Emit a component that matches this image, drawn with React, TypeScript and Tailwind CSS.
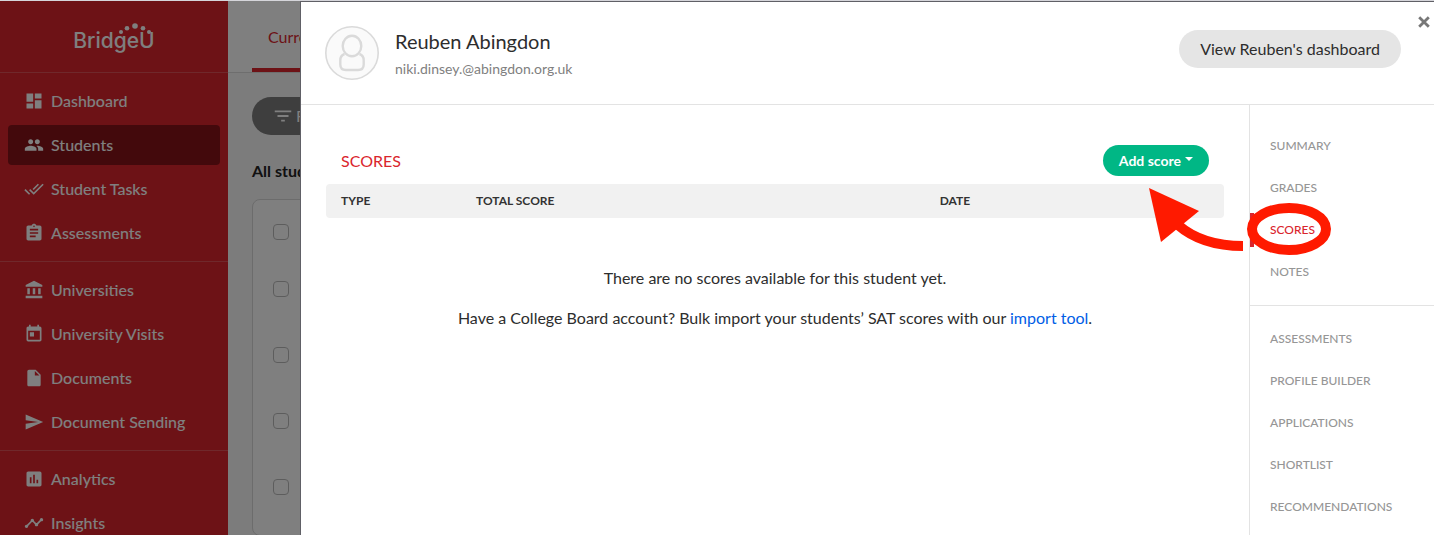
import { useState } from "react";
import type { IconType } from "react-icons";
import {
  MdAccountBalance,
  MdAssessment,
  MdAssignment,
  MdDashboard,
  MdDoneAll,
  MdFilterList,
  MdInsertDriveFile,
  MdPeople,
  MdSend,
  MdTimeline,
  MdToday,
} from "react-icons/md";

interface NavItem {
  label: string;
  icon: IconType;
}

const SIDEBAR: NavItem[][] = [
  [
    { label: "Dashboard", icon: MdDashboard },
    { label: "Students", icon: MdPeople },
    { label: "Student Tasks", icon: MdDoneAll },
    { label: "Assessments", icon: MdAssignment },
  ],
  [
    { label: "Universities", icon: MdAccountBalance },
    { label: "University Visits", icon: MdToday },
    { label: "Documents", icon: MdInsertDriveFile },
    { label: "Document Sending", icon: MdSend },
  ],
  [
    { label: "Analytics", icon: MdAssessment },
    { label: "Insights", icon: MdTimeline },
  ],
];

const PROFILE_TABS = [
  ["Summary", "Grades", "Scores", "Notes"],
  ["Assessments", "Profile Builder", "Applications", "Shortlist", "Recommendations"],
];

const Logo = () => (
  <a href="#" className="relative font-[Inter,sans-serif] text-[21px] leading-7 font-medium text-white">
    BridgeU
    <svg className="absolute -top-1 right-1 h-3 w-8" viewBox="0 0 32 12" fill="currentColor" aria-hidden="true">
      <circle cx="2" cy="9" r="2" />
      <circle cx="8" cy="5.3" r="2.3" />
      <circle cx="16" cy="3" r="2.800" />
      <circle cx="24" cy="5.3" r="2.3" />
      <circle cx="30" cy="9" r="2" />
    </svg>
  </a>
);

const Sidebar = () => (
  <aside className="w-[228px] shrink-0 bg-[#da252d] text-white">
    <div className="flex h-[72px] items-center justify-center border-b border-white/20 pt-2">
      <Logo />
    </div>
    <nav>
      {SIDEBAR.map((group, i) => (
        <ul key={i} className="space-y-1 border-b border-white/20 p-2">
          {group.map(({ label, icon: Icon }) => (
            <li key={label}>
              <a
                href="#"
                className={`flex h-10 items-center gap-[7px] rounded px-4 font-medium ${
                  label === "Students" ? "bg-[#861319]" : ""
                }`}
              >
                <Icon size={20} />
                {label}
              </a>
            </li>
          ))}
        </ul>
      ))}
    </nav>
  </aside>
);

const StudentList = () => (
  <main className="flex-1 bg-[#f8f8f8]">
    <div className="flex h-[72px] border-b border-[#dcdcdc] bg-white px-6">
      <a href="#" className="border-b-4 border-[#da252d] px-4 pt-6 text-[#da252d]">
        Current students
      </a>
    </div>
    <div className="p-6">
      <button type="button" className="flex h-[38px] items-center gap-0.5 rounded-full bg-[#7c7c7c] px-5 text-white">
        <MdFilterList size={22} />
        Filters
      </button>
      <h2 className="mt-6 font-bold text-[#222]">All students</h2>
      <div className="mt-4 space-y-[50px] rounded-lg border border-[#d8d8d8] bg-white px-5 pt-6 pb-10">
        {[1, 2, 3, 4, 5].map((n) => (
          <input
            key={n}
            type="checkbox"
            aria-label={`Select student ${n}`}
            className="block size-4 appearance-none rounded border border-[#bbb] first:mb-[41px]"
          />
        ))}
      </div>
    </div>
  </main>
);

const Avatar = () => (
  <svg className="size-[54px]" viewBox="0 0 54 54" fill="none" stroke="#dadada" aria-hidden="true">
    <circle cx="27" cy="27" r="26.2" fill="#fafafa" strokeWidth="1.6" />
    <path
      d="M19.500 28c-2.800 1-4.200 3.300-4.200 6.300v4.200c0 3.400 2.200 5.500 5.600 5.500h12.200c3.400 0 5.600-2.100 5.600-5.500v-4.200c0-3-1.400-5.300-4.200-6.300"
      strokeWidth="2.4"
    />
    <ellipse cx="27" cy="20" rx="9.300" ry="10.300" strokeWidth="2.4" />
  </svg>
);

const ScoresHint = () => (
  <svg
    className="pointer-events-none absolute -top-7 -left-[101px] z-10 h-[72px] w-[184px]"
    viewBox="0 0 184 72"
    fill="none"
    stroke="#ff1a00"
    strokeWidth="10"
    aria-hidden="true"
  >
    <ellipse cx="140" cy="44" rx="37" ry="21" />
    <path d="M29 40Q53 61 94 61" />
    <path d="M0 3L50 26L12 57Z" fill="#ff1a00" stroke="none" />
  </svg>
);

const ProfileNav = ({ active, onSelect }: { active: string; onSelect: (tab: string) => void }) => (
  <nav className="w-[185px] shrink-0 border-l border-[#e3e3e3]">
    {PROFILE_TABS.map((group, i) => (
      <ul key={i} className={`space-y-2 pb-4 ${i === 0 ? "border-b border-[#e3e3e3] pt-6" : "pt-4"}`}>
        {group.map((tab) => (
          <li key={tab} className="relative">
            <button
              type="button"
              onClick={() => onSelect(tab)}
              className={`flex h-[34px] w-full items-center border-l-4 pl-4 text-xs font-medium uppercase ${
                active === tab ? "border-[#da252d] text-[#da252d]" : "border-transparent text-[#969696]"
              }`}
            >
              {tab}
            </button>
            {tab === "Scores" && <ScoresHint />}
          </li>
        ))}
      </ul>
    ))}
  </nav>
);

const ScoresPanel = () => (
  <section className="min-w-0 flex-1 px-[25px] pt-10">
    <div className="flex items-center justify-between px-[15px]">
      <h2 className="text-[#da252d]">SCORES</h2>
      <button
        type="button"
        className="flex h-[31px] items-center gap-1 rounded-full bg-[#00b785] px-4 text-sm font-bold text-white"
      >
        Add score
        <span className="mb-1 border-x-4 border-t-4 border-x-transparent border-t-white" />
      </button>
    </div>
    <table className="mt-2 w-full table-fixed text-left text-xs text-[#333]">
      <thead>
        <tr className="h-[34px] bg-[#f1f1f1]">
          <th className="w-[135px] rounded-l pl-[15px]">TYPE</th>
          <th className="pl-[15px]">TOTAL SCORE</th>
          <th className="w-1/3 rounded-r pl-[15px]">DATE</th>
        </tr>
      </thead>
    </table>
    <div className="mt-12 space-y-4 text-center text-[#2d2d2d]">
      <p>There are no scores available for this student yet.</p>
      <p>
        Have a College Board account? Bulk import your students’ SAT scores with our{" "}
        <a href="#" className="text-[#005ee6]">
          import tool
        </a>
        .
      </p>
    </div>
  </section>
);

const StudentProfile = () => {
  const [tab, setTab] = useState("Scores");

  return (
    <div
      role="dialog"
      aria-label="Reuben Abingdon"
      className="fixed top-px right-0 bottom-0 left-[300px] flex flex-col overflow-hidden border-t border-l border-[#606066] bg-white"
    >
      <header className="flex h-[103px] shrink-0 items-center border-b border-[#e3e3e3] pr-[33px] pl-6">
        <Avatar />
        <div className="ml-4 space-y-1">
          <h1 className="text-xl leading-7 text-[#2d2d2d]">Reuben Abingdon</h1>
          <p className="text-sm text-[#808080]">niki.dinsey.@abingdon.org.uk</p>
        </div>
        <button
          type="button"
          className="mb-2 ml-auto h-[38px] rounded-full bg-[#e5e5e5] px-[21px] text-[#2d2d2d]"
        >
          View Reuben's dashboard
        </button>
        <button type="button" aria-label="Close" className="absolute top-3.5 right-1 text-[#777]">
          <svg className="size-3" viewBox="0 0 12 12" stroke="currentColor" strokeWidth="2.800" aria-hidden="true">
            <path d="M1.200 1.200l9.600 9.600M10.800 1.200l-9.600 9.600" />
          </svg>
        </button>
      </header>
      <div className="flex flex-1">
        <ScoresPanel />
        <ProfileNav active={tab} onSelect={setTab} />
      </div>
    </div>
  );
};

export default function App() {
  return (
    <div className="h-screen overflow-hidden border-t border-[#d5d5da] font-[Lato,sans-serif] text-base">
      <div className="flex min-h-full">
        <Sidebar />
        <StudentList />
      </div>
      <div className="fixed inset-x-0 top-px bottom-0 bg-black/50" />
      <StudentProfile />
    </div>
  );
}
